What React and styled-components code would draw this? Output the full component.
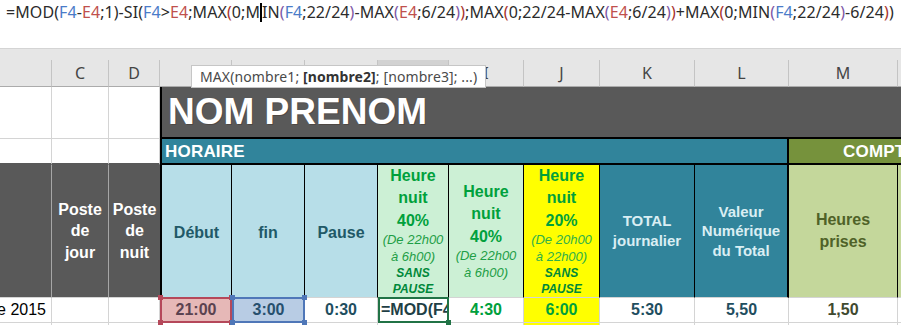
import React from 'react';
import styled, { createGlobalStyle } from 'styled-components';

const Global = createGlobalStyle`
  html, body { margin: 0; padding: 0; background: #fff; }
  body { width: 901px; height: 325px; overflow: hidden; }
`;

const Page = styled.div`
  position: relative;
  width: 901px;
  height: 325px;
  overflow: hidden;
  background: #fff;
  display: flex;
  flex-direction: column;
`;

const FormulaBar = styled.div`
  flex: none;
  box-sizing: border-box;
  height: 49px;
  border-bottom: 1px solid #d4d4d4;
  padding: 2px 0 0 6px;
  font-family: "Noto Sans", "Open Sans", sans-serif;
  font-size: 16px;
  letter-spacing: 0.08px;
  line-height: 20px;
  color: #2b2b2b;
  white-space: nowrap;
  overflow: hidden;
`;

const Tok = styled.span`
  color: ${(p) => p.$c || '#2b2b2b'};
`;

const Caret = styled.span`
  display: inline-block;
  width: 2px;
  height: 19px;
  vertical-align: -4px;
  background: #000;
`;

const HeaderGap = styled.div`
  flex: none;
  height: 11px;
  background: #e6e6e6;
`;

const Sheet = styled.div`
  flex: 1;
  display: grid;
  grid-template-columns: 52px 57px 51px 72px 73px 73px 71px 75px 76px 95px 94px 109px 60px;
  grid-template-rows: 27px 52px 26px 133px 25px 24px;
  font-family: "Liberation Sans", Arial, sans-serif;
`;

const ColHeader = styled.div`
  box-sizing: border-box;
  display: flex;
  align-items: center;
  justify-content: center;
  background: ${(p) => (p.$selected ? '#d2d2d2' : '#e6e6e6')};
  border-right: 1px solid #c4c4c4;
  border-bottom: 1px solid #ababab;
  font-family: "Noto Sans", "Open Sans", sans-serif;
  font-size: 16px;
  color: #444;
  overflow: hidden;
`;

const GridCell = styled.div`
  box-sizing: border-box;
  background: ${(p) => p.$bg || '#fff'};
  border-right: 1px solid #d4d4d4;
  border-bottom: ${(p) => p.$bottom || '1px solid #d4d4d4'};
`;

const TitleCell = styled.div`
  grid-column: 4 / -1;
  box-sizing: border-box;
  display: flex;
  align-items: center;
  padding-left: 6px;
  background: #595959;
  border-left: 2px solid #000;
  border-bottom: 2px solid #000;
  color: #fff;
  font-weight: bold;
  font-size: 37px;
  white-space: nowrap;
  text-shadow: 1px 1px 0 rgba(60, 40, 30, 0.35);
`;

const SectionCell = styled.div`
  grid-column: ${(p) => p.$span};
  box-sizing: border-box;
  display: flex;
  align-items: center;
  padding-left: ${(p) => p.$indent}px;
  padding-top: 1px;
  background: ${(p) => p.$bg};
  border-left: ${(p) => (p.$edgeLeft ? '2px solid #000' : 'none')};
  border-right: ${(p) => (p.$edgeRight ? '2px solid #000' : 'none')};
  border-bottom: 2px solid #000;
  color: #fff;
  font-weight: bold;
  font-size: 17px;
  letter-spacing: 0.2px;
  white-space: nowrap;
  overflow: hidden;
`;

const HeadCell = styled.div`
  box-sizing: border-box;
  display: flex;
  flex-direction: column;
  align-items: center;
  justify-content: center;
  text-align: center;
  background: ${(p) => p.$bg};
  color: ${(p) => p.$fg};
  border-left: ${(p) => (p.$edgeLeft ? '2px solid #000' : 'none')};
  border-right: ${(p) => p.$right || '1px solid #000'};
  border-bottom: 1px solid #d4d4d4;
  padding-top: ${(p) => p.$lift || 0}px;
  font-weight: bold;
  font-size: ${(p) => p.$size || 16}px;
  line-height: ${(p) => p.$lh || 21.6}px;
  overflow: hidden;
  white-space: nowrap;
`;

const Line = styled.span`
  display: block;
  color: ${(p) => p.$fg || 'inherit'};
  ${(p) =>
    p.$kind === 'big' &&
    `font-size: 16px; line-height: 22.5px; font-weight: bold; font-style: normal;`}
  ${(p) =>
    p.$kind === 'note' &&
    `font-size: 13px; line-height: 16.6px; font-weight: normal; font-style: italic;`}
  ${(p) =>
    p.$kind === 'tag' &&
    `font-size: 12px; line-height: 16px; font-weight: bold; font-style: italic;`}
`;

const DataCell = styled.div`
  position: relative;
  box-sizing: border-box;
  display: flex;
  align-items: center;
  justify-content: ${(p) => p.$align || 'center'};
  padding: ${(p) => p.$pad || '0'};
  background: ${(p) => p.$bg || '#fff'};
  color: ${(p) => p.$fg || '#000'};
  font-weight: ${(p) => (p.$plain ? 'normal' : 'bold')};
  font-size: 16px;
  white-space: nowrap;
  border-right: 1px solid #d4d4d4;
  border-bottom: 1px solid #d4d4d4;
  ${(p) =>
    p.$mark &&
    `margin-top: -1px; border: 2px solid ${p.$mark}; z-index: 1;`}
`;

const Clip = styled.span`
  display: block;
  overflow: hidden;
  width: 100%;
`;

const Handle = styled.span`
  position: absolute;
  width: 5px;
  height: 5px;
  background: ${(p) => p.$c};
  ${(p) => (p.$v === 'top' ? 'top: -4px;' : 'bottom: -4px;')}
  ${(p) => (p.$h === 'left' ? 'left: -4px;' : 'right: -4px;')}
  z-index: 2;
`;

const Tooltip = styled.div`
  position: absolute;
  left: 191px;
  top: 65px;
  width: 295px;
  height: 23px;
  box-sizing: border-box;
  padding: 0 0 0 8px;
  background: #fff;
  border: 1px solid #c6c6c6;
  font-family: "Noto Sans", "Open Sans", sans-serif;
  font-size: 14px;
  letter-spacing: 0.1px;
  line-height: 21px;
  color: #4a4a4a;
  white-space: nowrap;
  z-index: 5;
  b { color: #333; }
`;

const BLUE = '#4a7bc8';
const RED = '#c0504d';
const DRED = '#a8322d';
const PURP = '#7d57a6';

const formula = [
  ['=MOD('], ['F4', BLUE], ['-'], ['E4', RED], [';1)-SI('], ['F4', BLUE], ['>'], ['E4', RED],
  [';MAX'], ['(', DRED], ['0;M'], ['CARET'], ['IN'], ['(', PURP], ['F4', BLUE], [';22/24'], [')', PURP],
  ['-MAX'], ['(', PURP], ['E4', RED], [';6/24'], [')', PURP], [')', DRED],
  [';MAX'], ['(', DRED], ['0;22/24-MAX'], ['(', PURP], ['E4', RED], [';6/24'], [')', PURP], [')', DRED],
  ['+MAX'], ['(', DRED], ['0;MIN'], ['(', PURP], ['F4', BLUE], [';22/24'], [')', PURP], ['-6/24'],
  [')', DRED], [')'],
];

const cols = ['', 'C', 'D', 'E', 'F', 'G', 'H', 'I', 'J', 'K', 'L', 'M', 'N'];

const LB = '#b7dee8';
const TEAL = '#31849b';
const MINT = '#ccf0d5';
const OLIVE = '#c4d79b';
const GREEN = '#00a03c';
const NOTE = '#1e9e46';
const TAG = '#00883a';

export default function App() {
  return (
    <Page>
      <Global />
      <FormulaBar>
        {formula.map(([t, c], i) =>
          t === 'CARET' ? <Caret key={i} /> : (
            <Tok key={i} $c={c}>{t}</Tok>
          )
        )}
      </FormulaBar>
      <HeaderGap />
      <Sheet>
        {cols.map((c) => (
          <ColHeader key={c || 'blank'} $selected={c === 'H'}>{c}</ColHeader>
        ))}

        <GridCell />
        <GridCell />
        <GridCell />
        <TitleCell>NOM PRENOM</TitleCell>

        <GridCell $bottom="2px solid #595959" />
        <GridCell $bottom="2px solid #595959" />
        <GridCell $bottom="2px solid #595959" />
        <SectionCell $span="4 / 12" $bg={TEAL} $indent={3} $edgeLeft $edgeRight>HORAIRE</SectionCell>
        <SectionCell $span="12 / -1" $bg="#76923c" $indent={54}>COMPTEUR</SectionCell>

        <HeadCell $bg="#595959" $fg="#fff" $right="1px solid #a6a6a6" />
        <HeadCell $bg="#595959" $fg="#fff" $right="1px solid #a6a6a6">
          <Line>Poste</Line><Line>de</Line><Line>jour</Line>
        </HeadCell>
        <HeadCell $bg="#595959" $fg="#fff" $right="none">
          <Line>Poste</Line><Line>de</Line><Line>nuit</Line>
        </HeadCell>
        <HeadCell $bg={LB} $fg="#215967" $edgeLeft $lift={3}>Début</HeadCell>
        <HeadCell $bg={LB} $fg="#215967" $lift={3}>fin</HeadCell>
        <HeadCell $bg={LB} $fg="#215967" $lift={3}>Pause</HeadCell>
        <HeadCell $bg={MINT} $fg={GREEN}>
          <Line $kind="big">Heure</Line>
          <Line $kind="big">nuit</Line>
          <Line $kind="big">40%</Line>
          <Line $kind="note" $fg={NOTE}>(De 22h00</Line>
          <Line $kind="note" $fg={NOTE}>à 6h00)</Line>
          <Line $kind="tag" $fg={TAG}>SANS</Line>
          <Line $kind="tag" $fg={TAG}>PAUSE</Line>
        </HeadCell>
        <HeadCell $bg={MINT} $fg={GREEN}>
          <Line $kind="big">Heure</Line>
          <Line $kind="big">nuit</Line>
          <Line $kind="big">40%</Line>
          <Line $kind="note" $fg={NOTE}>(De 22h00</Line>
          <Line $kind="note" $fg={NOTE}>à 6h00)</Line>
        </HeadCell>
        <HeadCell $bg="#ffff00" $fg={GREEN}>
          <Line $kind="big">Heure</Line>
          <Line $kind="big">nuit</Line>
          <Line $kind="big">20%</Line>
          <Line $kind="note" $fg="#2fb04a">(De 20h00</Line>
          <Line $kind="note" $fg="#2fb04a">à 22h00)</Line>
          <Line $kind="tag" $fg={TAG}>SANS</Line>
          <Line $kind="tag" $fg={TAG}>PAUSE</Line>
        </HeadCell>
        <HeadCell $bg={TEAL} $fg="#daeef3" $size={15} $lh={20}>
          <Line>TOTAL</Line><Line>journalier</Line>
        </HeadCell>
        <HeadCell $bg={TEAL} $fg="#daeef3" $size={15} $lh={19.5} $right="2px solid #000">
          <Line>Valeur</Line><Line>Numérique</Line><Line>du Total</Line>
        </HeadCell>
        <HeadCell $bg={OLIVE} $fg="#4f6228">
          <Line>Heures</Line><Line>prises</Line>
        </HeadCell>
        <HeadCell $bg={OLIVE} $fg="#4f6228" $right="none" />

        <DataCell $plain $align="flex-end" $pad="0 5px 0 0" $fg="#000">e 2015</DataCell>
        <DataCell />
        <DataCell />
        <DataCell $mark="#b5485a" $bg="#e6b8b7" $fg="#5b4350">
          21:00
          <Handle $c="#b5485a" $v="top" $h="left" />
          <Handle $c="#b5485a" $v="bottom" $h="left" />
          <Handle $c="#b5485a" $v="top" $h="right" />
          <Handle $c="#b5485a" $v="bottom" $h="right" />
        </DataCell>
        <DataCell $mark="#4f77b8" $bg="#b8cce4" $fg="#27506e">
          3:00
          <Handle $c="#4f77b8" $v="top" $h="left" />
          <Handle $c="#4f77b8" $v="bottom" $h="left" />
          <Handle $c="#4f77b8" $v="top" $h="right" />
          <Handle $c="#4f77b8" $v="bottom" $h="right" />
        </DataCell>
        <DataCell $fg="#1f4e5f">0:30</DataCell>
        <DataCell $mark="#217346" $align="flex-start" $pad="0 0 0 1px" $fg="#1f3f45">
          <Clip>=MOD(F4</Clip>
          <Handle $c="#217346" $v="bottom" $h="right" />
        </DataCell>
        <DataCell $fg={GREEN}>4:30</DataCell>
        <DataCell $bg="#ffff00" $fg={GREEN}>6:00</DataCell>
        <DataCell $fg="#1f4e5f">5:30</DataCell>
        <DataCell $fg="#1f4e5f">5,50</DataCell>
        <DataCell $fg="#3f4a30">1,50</DataCell>
        <DataCell />

        {cols.map((c) => (
          <GridCell key={'r5' + c} $bg={c === 'J' ? '#ffff00' : '#fff'} />
        ))}
      </Sheet>
      <Tooltip>
        MAX(nombre1; <b>[nombre2]</b>; [nombre3]; ...)
      </Tooltip>
    </Page>
  );
}
